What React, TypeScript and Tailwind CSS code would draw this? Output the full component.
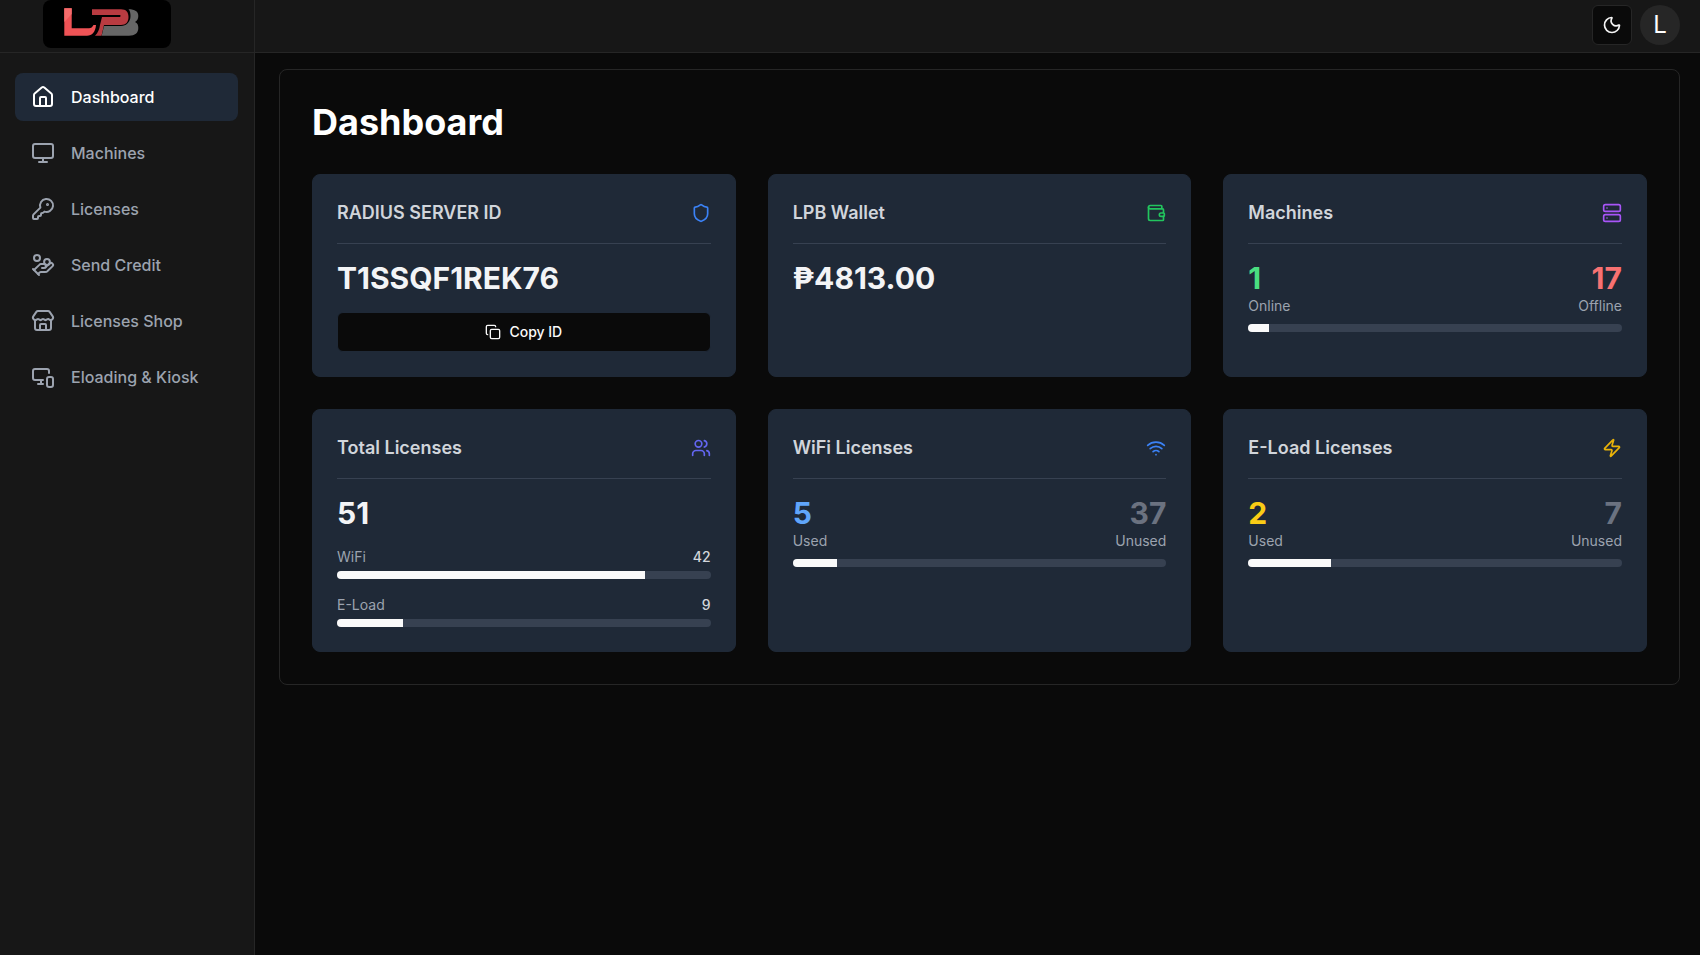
import { type ReactNode } from "react"
import {
  Copy,
  HandCoins,
  Home,
  KeyRound,
  Monitor,
  MonitorSmartphone,
  Moon,
  Server,
  Shield,
  Store,
  Users,
  Wallet,
  Wifi,
  Zap,
  type LucideIcon,
} from "lucide-react"

const navItems: { label: string; icon: LucideIcon; active?: boolean }[] = [
  { label: "Dashboard", icon: Home, active: true },
  { label: "Machines", icon: Monitor },
  { label: "Licenses", icon: KeyRound },
  { label: "Send Credit", icon: HandCoins },
  { label: "Licenses Shop", icon: Store },
  { label: "Eloading & Kiosk", icon: MonitorSmartphone },
]

function Logo() {
  return (
    <svg width="128" height="48" viewBox="0 0 128 48" className="block" aria-hidden>
      <path d="M21.300 8.300H28.700V28.300H46C48 28.300 49.500 27 50.500 25H53C52.500 32 49 35.700 44 35.700H21.300Z" fill="#ef5356" />
      <path d="M21.300 8.300H28.700V14L21.300 22Z" fill="#f56b6b" />
      <path
        d="M49 9.300H78C83 9.300 85.500 12 85.500 17C85.500 22 83 25 78 25H61L58.500 35.700H52C55 33 56.500 29 57 25L59 17H76C78 17 78.500 15 76 15H49Z"
        fill="#b93b41"
      />
      <path
        d="M85.500 9.300C92 9.300 95.300 11.500 95.300 16C95.300 19 94 21 92 22C94.500 23 95.300 25 95.300 28C95.300 33 92 35.700 86 35.700H58.700L61 26H78C83 26 87.500 22 87.500 16C87.500 13 87 11 85.500 9.300Z"
        fill="#666666"
      />
    </svg>
  )
}

function Sidebar() {
  return (
    <aside className="w-[255px] shrink-0 border-r border-[#262626] bg-[#171717]">
      <div className="h-[53px] border-b border-[#262626] pl-[43px]">
        <div className="h-12 w-32 rounded-lg bg-black">
          <Logo />
        </div>
      </div>
      <nav className="flex flex-col gap-2 pl-[15px] pr-4 pt-5">
        {navItems.map((item) => (
          <div
            key={item.label}
            className={
              item.active
                ? "flex h-12 items-center gap-4 rounded-lg bg-[#1f2937] px-4 text-base font-medium text-white"
                : "flex h-12 items-center gap-4 rounded-lg px-4 text-base font-medium text-[#9ca3af]"
            }
          >
            <item.icon className="size-6 shrink-0" strokeWidth={2} />
            {item.label}
          </div>
        ))}
      </nav>
    </aside>
  )
}

function StatCard({
  title,
  icon: Icon,
  iconClass,
  children,
}: {
  title: string
  icon: LucideIcon
  iconClass: string
  children: ReactNode
}) {
  return (
    <div className="rounded-lg border border-[#1f2937] bg-[#1f2937] p-6">
      <div className="flex items-center justify-between border-b border-[#374151] pb-4">
        <div className="text-lg font-semibold text-[#d1d5db]">{title}</div>
        <Icon className={`size-5 ${iconClass}`} />
      </div>
      <div className="pt-4">{children}</div>
    </div>
  )
}

function Bar({ percent }: { percent: number }) {
  return (
    <div className="h-2 overflow-hidden rounded-full bg-[#374151]">
      <div className="h-full bg-[#fafafa]" style={{ width: `${percent}%` }} />
    </div>
  )
}

function SplitStat({
  left,
  right,
  leftLabel,
  rightLabel,
  leftClass,
  rightClass,
  percent,
}: {
  left: number
  right: number
  leftLabel: string
  rightLabel: string
  leftClass: string
  rightClass: string
  percent: number
}) {
  return (
    <div>
      <div className="flex justify-between">
        <div>
          <div className={`text-3xl font-bold ${leftClass}`}>{left}</div>
          <div className="text-sm text-[#9ca3af]">{leftLabel}</div>
        </div>
        <div className="text-right">
          <div className={`text-3xl font-bold ${rightClass}`}>{right}</div>
          <div className="text-sm text-[#9ca3af]">{rightLabel}</div>
        </div>
      </div>
      <div className="mt-2">
        <Bar percent={percent} />
      </div>
    </div>
  )
}

function LicenseRow({ label, value, percent }: { label: string; value: number; percent: number }) {
  return (
    <div className="mt-4">
      <div className="flex justify-between text-sm">
        <span className="text-[#9ca3af]">{label}</span>
        <span className="font-medium text-[#d1d5db]">{value}</span>
      </div>
      <div className="mt-1">
        <Bar percent={percent} />
      </div>
    </div>
  )
}

export default function App() {
  return (
    <div className="flex min-h-[955px] bg-[#0a0a0a] font-['Inter',sans-serif] text-white">
      <Sidebar />
      <div className="min-w-0 flex-1">
        <header className="flex h-[53px] items-start justify-end gap-2 border-b border-[#262626] bg-[#171717] pr-5 pt-[5px]">
          <button className="flex size-10 items-center justify-center rounded-md border border-[#262626] bg-[#0a0a0a]">
            <Moon className="size-5 text-[#f5f5f5]" />
          </button>
          <div className="flex size-10 items-center justify-center rounded-full bg-[#262626] text-2xl">L</div>
        </header>
        <main className="pl-6 pr-5 pt-4">
          <div className="rounded-lg border border-[#262626] p-8">
            <h1 className="text-4xl font-bold leading-10">Dashboard</h1>
            <div className="mt-8 grid grid-cols-3 gap-8">
              <StatCard title="RADIUS SERVER ID" icon={Shield} iconClass="text-[#3b82f6]">
                <div className="text-3xl font-bold text-[#f3f4f6]">T1SSQF1REK76</div>
                <button className="mt-4 flex h-10 w-full items-center justify-center gap-2 rounded-md border border-[#1f2937] bg-[#0a0a0a] text-sm font-medium text-[#fafafa]">
                  <Copy className="size-4" />
                  Copy ID
                </button>
              </StatCard>
              <StatCard title="LPB Wallet" icon={Wallet} iconClass="text-[#22c55e]">
                <div className="text-3xl font-bold text-[#f3f4f6]">₱4813.00</div>
              </StatCard>
              <StatCard title="Machines" icon={Server} iconClass="text-[#a855f7]">
                <SplitStat
                  left={1}
                  right={17}
                  leftLabel="Online"
                  rightLabel="Offline"
                  leftClass="text-[#4ade80]"
                  rightClass="text-[#f87171]"
                  percent={5.56}
                />
              </StatCard>
              <StatCard title="Total Licenses" icon={Users} iconClass="text-[#6366f1]">
                <div className="text-3xl font-bold text-[#f3f4f6]">51</div>
                <LicenseRow label="WiFi" value={42} percent={82.35} />
                <LicenseRow label="E-Load" value={9} percent={17.65} />
              </StatCard>
              <StatCard title="WiFi Licenses" icon={Wifi} iconClass="text-[#3b82f6]">
                <SplitStat
                  left={5}
                  right={37}
                  leftLabel="Used"
                  rightLabel="Unused"
                  leftClass="text-[#60a5fa]"
                  rightClass="text-[#6b7280]"
                  percent={11.9}
                />
              </StatCard>
              <StatCard title="E-Load Licenses" icon={Zap} iconClass="text-[#eab308]">
                <SplitStat
                  left={2}
                  right={7}
                  leftLabel="Used"
                  rightLabel="Unused"
                  leftClass="text-[#facc15]"
                  rightClass="text-[#6b7280]"
                  percent={22.22}
                />
              </StatCard>
            </div>
          </div>
        </main>
      </div>
    </div>
  )
}
